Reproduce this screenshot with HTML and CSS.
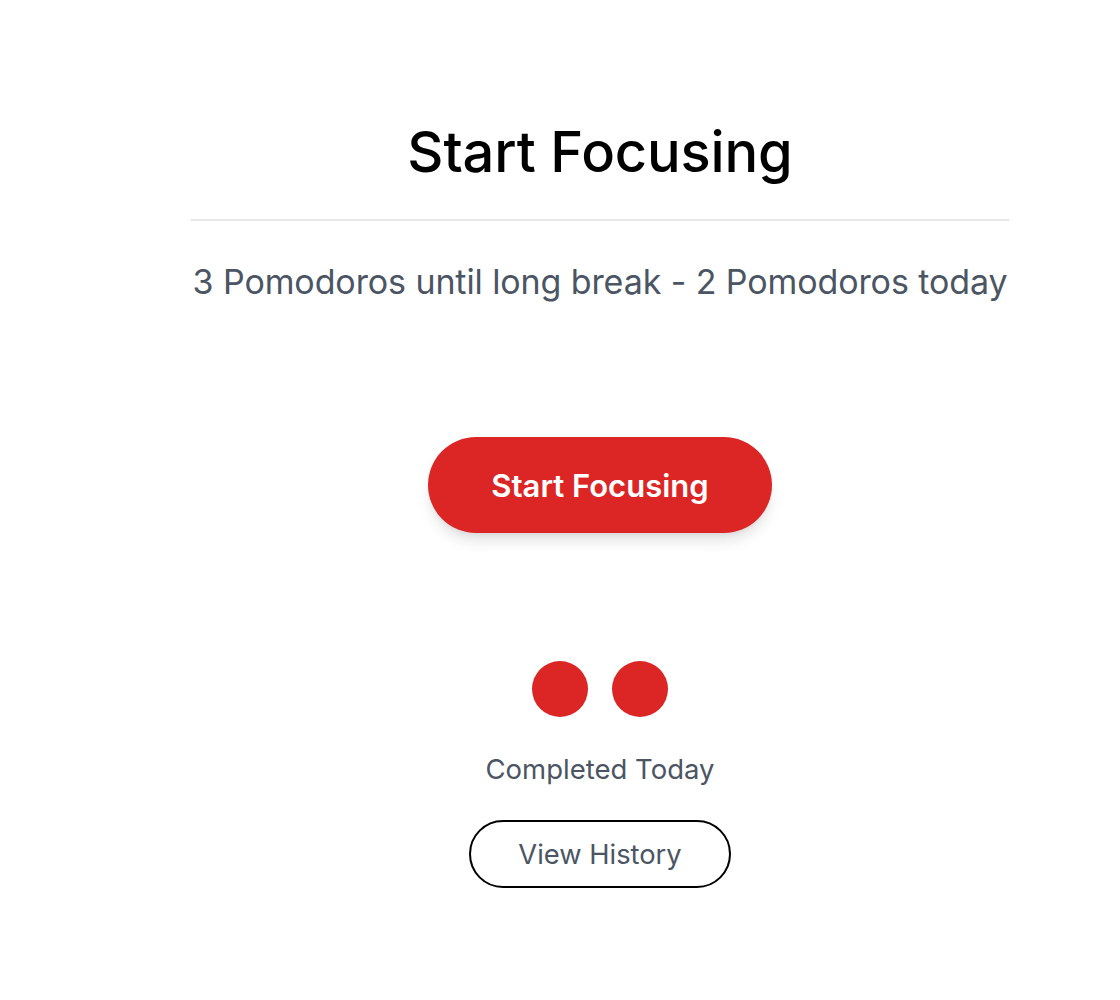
FILE: index.html
```html
<!DOCTYPE html>
<html lang="en">
<head>
<meta charset="utf-8">
<title>Pomodoro</title>
<link rel="stylesheet" href="styles.css">
</head>
<body>
<main class="page">
  <section class="panel">
    <h1 class="title">Start Focusing</h1>
    <hr class="divider">
    <p class="status">3 Pomodoros until long break - 2 Pomodoros today</p>
    <button class="start-btn" type="button">Start Focusing</button>
    <div class="dots">
      <span class="dot"></span>
      <span class="dot"></span>
    </div>
    <p class="completed">Completed Today</p>
    <button class="history-btn" type="button">View History</button>
  </section>
</main>
</body>
</html>
```

FILE: styles.css
```css
* { box-sizing: border-box; }
html, body { margin: 0; padding: 0; background: #ffffff; }
body {
  font-family: "Inter", "Liberation Sans", sans-serif;
  color: #000;
}
.page {
  padding-left: 80px;
  display: flex;
  justify-content: center;
}
.panel {
  width: 818px;
  display: flex;
  flex-direction: column;
  align-items: center;
  padding-top: 116px;
}
.title {
  margin: 0;
  font-size: 56px;
  line-height: 72px;
  font-weight: 500;
  letter-spacing: -0.15px;
}
.divider {
  width: 100%;
  border: 0;
  border-top: 2px solid #e5e7eb;
  margin: 31px 0 0;
}
.status {
  margin: 40px 0 0;
  font-size: 34px;
  line-height: 42px;
  color: #4b5563;
  white-space: nowrap;
  letter-spacing: -0.1px;
}
.start-btn {
  margin-top: 134px;
  width: 344px;
  height: 96px;
  border: 0;
  border-radius: 48px;
  background: #dc2626;
  color: #fff;
  font-family: inherit;
  font-size: 31px;
  font-weight: 600;
  box-shadow: 0 10px 15px -3px rgba(0,0,0,0.12), 0 4px 6px -4px rgba(0,0,0,0.1);
}
.dots {
  margin-top: 128px;
  display: flex;
  gap: 24px;
}
.dot {
  width: 56px;
  height: 56px;
  border-radius: 50%;
  background: #dc2626;
}
.completed {
  margin: 34px 0 0;
  font-size: 27.5px;
  line-height: 36px;
  color: #4b5563;
}
.history-btn {
  margin-top: 33px;
  width: 262px;
  height: 68px;
  border: 2px solid #000;
  border-radius: 34px;
  background: #fff;
  color: #4b5563;
  font-family: inherit;
  font-size: 27.3px;
}
```
